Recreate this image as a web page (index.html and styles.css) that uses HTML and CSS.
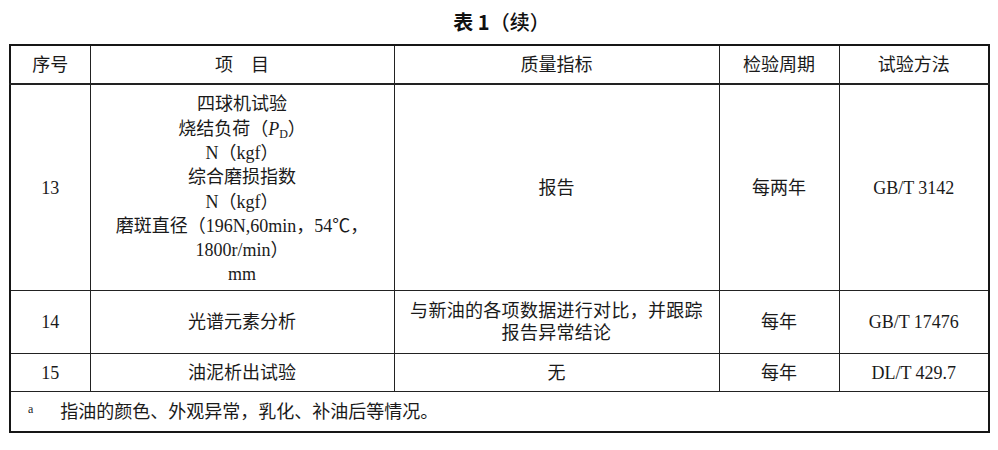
FILE: index.html
```html
<!DOCTYPE html>
<html lang="zh-CN">
<head>
<meta charset="utf-8">
<title>表1（续）</title>
<link rel="stylesheet" href="styles.css">
</head>
<body>
<div class="page">
  <h1 class="caption"><span class="cap-num">表 1</span><span class="cap-cont">（续）</span></h1>
  <table class="spec">
    <colgroup>
      <col class="c-no">
      <col class="c-item">
      <col class="c-req">
      <col class="c-period">
      <col class="c-method">
    </colgroup>
    <thead>
      <tr class="r-head">
        <th>序号</th>
        <th>项　目</th>
        <th>质量指标</th>
        <th>检验周期</th>
        <th>试验方法</th>
      </tr>
    </thead>
    <tbody>
      <tr class="r-13">
        <td>13</td>
        <td class="multi">四球机试验<br>烧结负荷（<i>P</i><sub>D</sub>）<br>N（kgf）<br>综合磨损指数<br>N（kgf）<br>磨斑直径（196N,60min，54℃，<br>1800r/min）<br>mm</td>
        <td>报告</td>
        <td>每两年</td>
        <td>GB/T 3142</td>
      </tr>
      <tr class="r-14">
        <td>14</td>
        <td>光谱元素分析</td>
        <td class="wrap">与新油的各项数据进行对比，并跟踪<br>报告异常结论</td>
        <td>每年</td>
        <td>GB/T 17476</td>
      </tr>
      <tr class="r-15">
        <td>15</td>
        <td>油泥析出试验</td>
        <td>无</td>
        <td>每年</td>
        <td>DL/T 429.7</td>
      </tr>
      <tr class="r-note">
        <td colspan="5" class="note"><sup class="mark">a</sup><span class="note-text">指油的颜色、外观异常，乳化、补油后等情况。</span></td>
      </tr>
    </tbody>
  </table>
</div>
</body>
</html>
```

FILE: styles.css
```css
html, body {
  margin: 0;
  padding: 0;
  background: #ffffff;
}

.page {
  width: 998px;
  height: 450px;
  padding: 0 0 0 9px;
  box-sizing: border-box;
  font-family: "Liberation Serif", "Noto Sans CJK SC", serif;
  color: #1a1a1a;
}

.caption {
  margin: 0;
  height: 44px;
  width: 979px;
  display: flex;
  justify-content: center;
  align-items: center;
  box-sizing: border-box;
  font-family: "Noto Sans CJK SC", sans-serif;
  font-size: 20px;
  line-height: 1;
  color: #111;
}

.cap-num {
  font-weight: 700;
  padding-left: 6px;
}

.cap-cont {
  font-weight: 500;
}

.spec {
  border-collapse: collapse;
  table-layout: fixed;
  width: 979px;
  border: 2px solid #161616;
  font-size: 18px;
}

.c-no { width: 80px; }
.c-item { width: 304px; }
.c-req { width: 325px; }
.c-period { width: 120px; }
.c-method { width: 150px; }

.spec th,
.spec td {
  border: 1px solid #222;
  text-align: center;
  vertical-align: middle;
  padding: 0;
  font-weight: normal;
  line-height: 24px;
}

.r-head th {
  height: 37px;
  border-bottom: 2px solid #222;
}

.r-13 td {
  height: 201px;
}

.spec .multi {
  line-height: 24.3px;
  padding-top: 4px;
}

.multi i {
  font-style: italic;
}

.multi sub {
  font-size: 12px;
  vertical-align: -3px;
  line-height: 0;
}

.r-14 td {
  height: 62px;
}

.spec .wrap {
  line-height: 22px;
  padding: 0 8px;
  letter-spacing: 0.3px;
}

.r-15 td {
  height: 37px;
}

.r-note td {
  height: 39px;
}

.spec .note {
  text-align: left;
  padding-left: 17px;
}

.mark {
  font-size: 12px;
  vertical-align: 5px;
  line-height: 0;
}

.note-text {
  margin-left: 27px;
}
```
